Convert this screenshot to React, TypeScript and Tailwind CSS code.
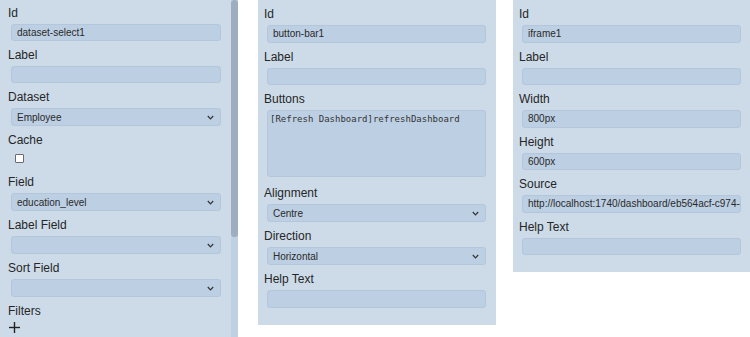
import React from "react";

const font = { fontFamily: '"Liberation Sans", Arial, sans-serif' };

function Label({ text }: { text: string }) {
  return (
    <div className="h-[25px] pt-[7px] text-[12px] leading-[15px] text-[#262626] shrink-0">
      {text}
    </div>
  );
}

function Input({ value, h = "h-[17px]" }: { value?: string; h?: string }) {
  return (
    <div
      className={`${h} shrink-0 ml-[3px] rounded-[3px] border border-[#b3c6db] bg-[#bdcfe2] px-[5px] text-[10px] text-[#2a2a2a] flex items-center overflow-hidden whitespace-nowrap`}
    >
      {value}
    </div>
  );
}

function Chevron() {
  return (
    <svg width="7" height="5" viewBox="0 0 7 5" className="shrink-0">
      <polyline points="0.8,1 3.5,3.8 6.2,1" fill="none" stroke="#333" strokeWidth="1.2" />
    </svg>
  );
}

function Select({ value }: { value?: string }) {
  return (
    <div className="h-[18px] shrink-0 ml-[3px] rounded-[3px] border border-[#b3c6db] bg-[#bdcfe2] pl-[5px] pr-[6px] text-[10px] text-[#2a2a2a] flex items-center justify-between">
      <span>{value}</span>
      <Chevron />
    </div>
  );
}

export default function App() {
  return (
    <div className="w-[750px] h-[337px] bg-white flex items-start overflow-hidden" style={font}>
      {/* Panel 1 */}
      <div className="w-[238px] h-[337px] flex shrink-0 bg-[#cddbe9]">
        <div className="w-[231px] pl-[8px] pr-[10px] flex flex-col -mt-[1px]">
          <Label text="Id" />
          <Input value="dataset-select1" />
          <Label text="Label" />
          <Input />
          <Label text="Dataset" />
          <Select value="Employee" />
          <Label text="Cache" />
          <div className="h-[17px] pt-[3px] pl-[7px] shrink-0">
            <div className="w-[9px] h-[9px] bg-white border border-[#6b6b6b] rounded-[1px]" />
          </div>
          <Label text="Field" />
          <Select value="education_level" />
          <Label text="Label Field" />
          <Select />
          <Label text="Sort Field" />
          <Select />
          <Label text="Filters" />
          <svg width="11" height="11" viewBox="0 0 11 11" className="shrink-0 ml-[1px]">
            <line x1="5.5" y1="0" x2="5.5" y2="11" stroke="#222" strokeWidth="1.4" />
            <line x1="0" y1="5.5" x2="11" y2="5.5" stroke="#222" strokeWidth="1.4" />
          </svg>
        </div>
        <div className="w-[7px] h-full bg-[#bfd0e2] flex flex-col">
          <div className="h-[237px] w-full rounded-[4px] bg-[#9eaec0]" />
        </div>
      </div>

      {/* Panel 2 */}
      <div className="ml-[20px] w-[238px] shrink-0 bg-[#cddbe9] pl-[6px] pr-[10px] pb-[17px] flex flex-col">
        <Label text="Id" />
        <Input value="button-bar1" h="h-[17.5px]" />
        <Label text="Label" />
        <Input h="h-[17.5px]" />
        <Label text="Buttons" />
        <div
          className="h-[67px] mb-[2px] shrink-0 ml-[3px] rounded-[3px] border border-[#b3c6db] bg-[#bdcfe2] px-[2px] pt-[2px] text-[9px] leading-[12px] text-[#333] whitespace-nowrap"
          style={{ fontFamily: '"DejaVu Sans Mono", monospace' }}
        >
          [Refresh Dashboard]refreshDashboard
        </div>
        <Label text="Alignment" />
        <Select value="Centre" />
        <Label text="Direction" />
        <Select value="Horizontal" />
        <Label text="Help Text" />
        <Input h="h-[17.5px]" />
      </div>

      {/* Panel 3 */}
      <div className="ml-[17px] w-[237px] shrink-0 bg-[#cddbe9] pl-[6px] pr-[9px] pb-[17px] flex flex-col">
        <Label text="Id" />
        <Input value="iframe1" h="h-[17.5px]" />
        <Label text="Label" />
        <Input h="h-[17.5px]" />
        <Label text="Width" />
        <Input value="800px" h="h-[17.5px]" />
        <Label text="Height" />
        <Input value="600px" h="h-[17.5px]" />
        <Label text="Source" />
        <Input value="http://localhost:1740/dashboard/eb564acf-c974-4a1e" h="h-[17.5px]" />
        <Label text="Help Text" />
        <Input h="h-[17.5px]" />
      </div>
    </div>
  );
}
